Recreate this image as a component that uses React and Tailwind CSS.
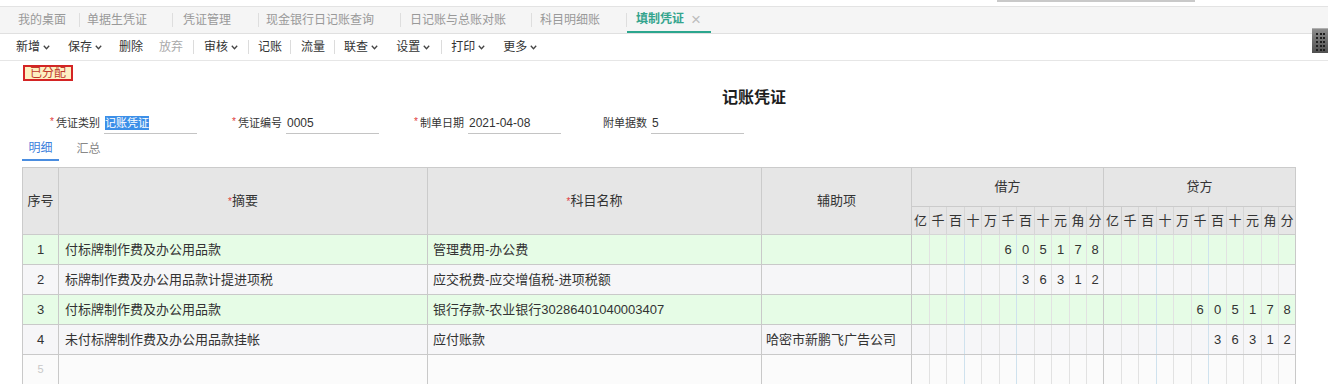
import React from 'react';

const tabs = [
  { label: '我的桌面', cls: 'w-[79px] pl-[18px]' },
  { label: '单据生凭证', cls: 'w-[92px] pl-[7px]' },
  { label: '凭证管理', cls: 'w-[85px] pl-[10px]' },
  { label: '现金银行日记账查询', cls: 'w-[141px] pl-[7px]' },
  { label: '日记账与总账对账', cls: 'w-[130px] pl-[9px]' },
  { label: '科目明细账', cls: 'w-[94px] pl-[8px]' },
];

const tools = [
  { label: '新增', ml: 'ml-[16px]', drop: true },
  { label: '保存', ml: 'ml-[18px]', drop: true },
  { label: '删除', ml: 'ml-[17px]' },
  { label: '放弃', ml: 'ml-[16px]', muted: true },
  { sep: true, ml: 'ml-[10px]' },
  { label: '审核', ml: 'ml-[10px]', drop: true },
  { sep: true, ml: 'ml-[10px]' },
  { label: '记账', ml: 'ml-[9px]' },
  { sep: true, ml: 'ml-[8px]' },
  { label: '流量', ml: 'ml-[10px]' },
  { sep: true, ml: 'ml-[9px]' },
  { label: '联查', ml: 'ml-[9px]', drop: true },
  { label: '设置', ml: 'ml-[18px]', drop: true },
  { sep: true, ml: 'ml-[11px]' },
  { label: '打印', ml: 'ml-[9px]', drop: true },
  { label: '更多', ml: 'ml-[18px]', drop: true },
];

const digitLabels = ['亿', '千', '百', '十', '万', '千', '百', '十', '元', '角', '分'];
const digitWidths = [18, 17, 18, 17, 18, 17, 18, 17, 18, 17, 17];

// left border colour of each digit column in the body (group lines are blue-ish)
const digitLine = (i) => {
  if (i === 0) return 'border-l-[#c9c9c9]';
  if (i === 3 || i === 6) return 'border-l-[#cfe2ee]';
  return 'border-l-[#e2e2e2]';
};

const GREEN = 'bg-[#e6fce6]';
const GREY = 'bg-[#f6f6f8]';

const rows = [
  { no: '1', zy: '付标牌制作费及办公用品款', km: '管理费用-办公费', fz: '', jf: '605178', df: '', bg: GREEN },
  { no: '2', zy: '标牌制作费及办公用品款计提进项税', km: '应交税费-应交增值税-进项税额', fz: '', jf: '36312', df: '', bg: GREY },
  { no: '3', zy: '付标牌制作费及办公用品款', km: '银行存款-农业银行30286401040003407', fz: '', jf: '', df: '605178', bg: GREEN },
  { no: '4', zy: '未付标牌制作费及办公用品款挂帐', km: '应付账款', fz: '哈密市新鹏飞广告公司', jf: '', df: '36312', bg: GREY },
  { no: '5', zy: '', km: '', fz: '', jf: '', df: '', bg: 'bg-[#fbfbfb]', empty: true },
];

const toDigits = (s) => {
  const arr = Array(11).fill('');
  const chars = s.split('');
  chars.forEach((c, i) => {
    arr[11 - chars.length + i] = c;
  });
  return arr;
};

const Chevron = () => (
  <svg width="7" height="5" viewBox="0 0 7 5" className="ml-[3px] mt-[1px]">
    <path d="M0.8 0.8 L3.5 3.8 L6.2 0.8" fill="none" stroke="#444" strokeWidth="1.3" />
  </svg>
);

const Star = ({ cls = '' }) => (
  <span className={`text-[#e03a3a] text-[10px] leading-none -translate-y-[2px] ${cls}`}>*</span>
);

const Field = ({ star, label, value, selected, cls }) => (
  <div className={`flex items-center h-full ${cls}`}>
    {star ? <Star cls="w-[6px]" /> : null}
    <span className="w-[48px] text-[11px] text-[#333]">{label}</span>
    <div className="w-[93px] h-full flex items-center border-b border-[#c4c4c4] pl-[1px] text-[12px] text-[#333]">
      {selected ? <span className="bg-[#3c8fe8] text-white text-[11px] leading-[14px]">{value}</span> : value}
    </div>
  </div>
);

const ScrollGrip = () => (
  <div className="absolute left-[1312px] top-[28px] w-[16px] h-[25px] border-t border-[#b0b0b0] bg-linear-to-b from-[#8c8c8c] to-[#505050]">
    <svg width="16" height="24" viewBox="0 0 16 24">
      {[4, 8, 12, 16, 20].map((y) =>
        [4, 8, 11].map((x) => <rect key={`${x}-${y}`} x={x} y={y} width="2" height="2" fill="#1e1e1e" />)
      )}
    </svg>
  </div>
);

const App = () => {
  return (
    <div className="relative w-[1328px] h-[384px] overflow-hidden bg-white [font-family:'Liberation_Sans','Noto_Sans_CJK_SC',sans-serif]">
      {/* top strip */}
      <div className="h-[7px] border-b border-[#e3e3e3] flex">
        <div className="ml-[997px] w-[198px] h-[2px] bg-[#c9c9c9]"></div>
      </div>

      {/* open tabs */}
      <div className="h-[27px] bg-[#f5f5f5] border-b border-[#e0e0e0] flex">
        {tabs.map((t) => (
          <React.Fragment key={t.label}>
            <div className={`flex items-center h-full text-[12px] text-[#999] ${t.cls}`}>{t.label}</div>
            <div className="w-px h-[14px] bg-[#dedede] self-center"></div>
          </React.Fragment>
        ))}
        <div className="w-[84px] h-full flex items-center pl-[9px] border-b-2 border-[#2ba68e] text-[12px] font-bold text-[#34a48d]">
          填制凭证
          <span className="ml-[7px] text-[17px] font-light text-[#bdbdbd] leading-none">×</span>
        </div>
      </div>

      {/* toolbar */}
      <div className="h-[27px] border-b border-[#e6e6e6] flex items-center">
        {tools.map((t, i) =>
          t.sep ? (
            <div key={i} className={`w-px h-[14px] bg-[#dcdcdc] ${t.ml}`}></div>
          ) : (
            <div key={i} className={`flex items-center text-[12px] ${t.muted ? 'text-[#aaa]' : 'text-[#333]'} ${t.ml}`}>
              {t.label}
              {t.drop && <Chevron />}
            </div>
          )
        )}
      </div>

      <ScrollGrip />

      {/* status badge */}
      <div className="mt-[4px] ml-[23px] w-[50px] h-[16px] border-2 border-[#d42424] bg-[#fdf0c2] flex items-center justify-center text-[12px] leading-none text-[#c0392b]">
        已分配
      </div>

      <div className="mt-[7px] ml-[722px] h-[20px] text-[16px] leading-[20px] font-bold text-[#1e1e1e]">记账凭证</div>

      {/* header fields */}
      <div className="mt-[5px] h-[21px] flex">
        <Field star label="凭证类别" value="记账凭证" selected cls="ml-[50px]" />
        <Field star label="凭证编号" value="0005" cls="ml-[35px]" />
        <Field star label="制单日期" value="2021-04-08" cls="ml-[35px]" />
        <Field label="附单据数" value="5" cls="ml-[42px]" />
      </div>

      {/* detail / summary tabs */}
      <div className="mt-[2px] ml-[22px] h-[25px] flex">
        <div className="w-[37px] h-full flex items-center justify-center border-b-2 border-[#4a8de0] text-[12px] text-[#3c80dc]">明细</div>
        <div className="ml-[11px] w-[37px] h-full flex items-center justify-center text-[12px] text-[#888]">汇总</div>
      </div>

      {/* voucher table */}
      <table className="mt-[6px] ml-[22px] table-fixed border-collapse w-[1273px] text-[13px] text-[#333]">
        <colgroup>
          <col className="w-[36px]" />
          <col className="w-[369px]" />
          <col className="w-[334px]" />
          <col className="w-[150px]" />
          {digitWidths.map((w, i) => (
            <col key={`d${i}`} style={{ width: w }} />
          ))}
          {digitWidths.map((w, i) => (
            <col key={`c${i}`} style={{ width: w }} />
          ))}
        </colgroup>
        <thead>
          <tr className="h-[39px] bg-[#e6e6e6]">
            <th rowSpan={2} className="border border-[#cbcbcb] font-normal p-0">序号</th>
            <th rowSpan={2} className="border border-[#cbcbcb] font-normal p-0"><Star />摘要</th>
            <th rowSpan={2} className="border border-[#cbcbcb] font-normal p-0"><Star />科目名称</th>
            <th rowSpan={2} className="border border-[#cbcbcb] font-normal p-0">辅助项</th>
            <th colSpan={11} className="border border-[#cbcbcb] font-normal p-0">借方</th>
            <th colSpan={11} className="border border-[#cbcbcb] font-normal p-0">贷方</th>
          </tr>
          <tr className="h-[28px] bg-[#e6e6e6]">
            {[...digitLabels, ...digitLabels].map((d, i) => (
              <th key={i} className={`border ${i === 10 || i === 11 || i === 21 ? 'border-[#cbcbcb]' : 'border-[#d6d6d6]'} font-normal p-0 text-center`}>{d}</th>
            ))}
          </tr>
        </thead>
        <tbody>
          {rows.map((r) => {
            const jf = toDigits(r.jf);
            const df = toDigits(r.df);
            return (
              <tr key={r.no} className={`h-[30px] ${r.bg}`}>
                <td className={`border-l border-b border-[#c9c9c9] p-0 text-center ${r.empty ? 'text-[11px] text-[#c8c8c8]' : ''}`}>{r.no}</td>
                <td className="border-l border-b border-[#c9c9c9] pl-[6px] whitespace-nowrap overflow-hidden">{r.zy}</td>
                <td className="border-l border-b border-[#c9c9c9] pl-[5px] whitespace-nowrap overflow-hidden">{r.km}</td>
                <td className="border-l border-b border-[#c9c9c9] pl-[4px] whitespace-nowrap overflow-hidden">{r.fz}</td>
                {jf.map((d, i) => (
                  <td key={`j${i}`} className={`border-l border-b border-b-[#c9c9c9] p-0 text-center ${digitLine(i)}`}>{d}</td>
                ))}
                {df.map((d, i) => (
                  <td key={`k${i}`} className={`border-l border-b border-b-[#c9c9c9] p-0 text-center ${digitLine(i)} ${i === 10 ? 'border-r border-r-[#c9c9c9]' : ''}`}>{d}</td>
                ))}
              </tr>
            );
          })}
        </tbody>
      </table>
    </div>
  );
};

export default App;
